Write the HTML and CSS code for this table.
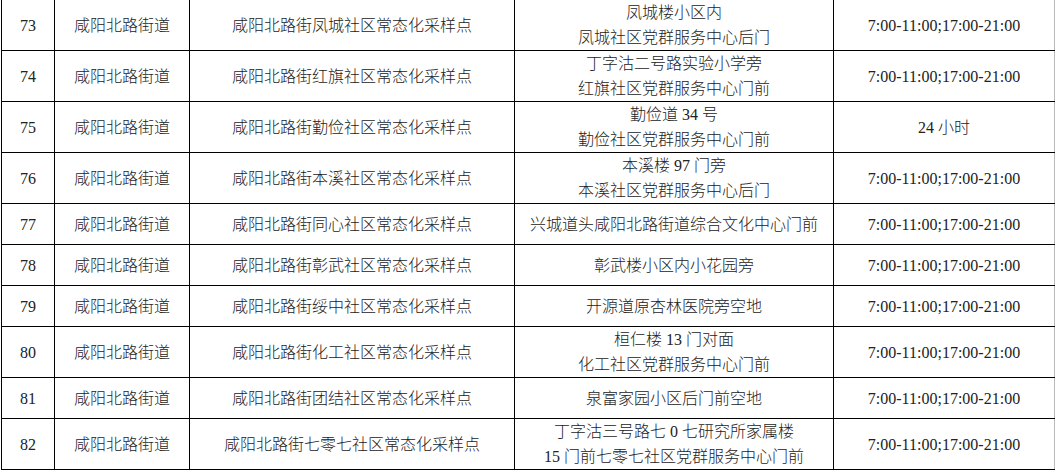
FILE: index.html
```html
<!DOCTYPE html>
<html lang="zh-CN">
<head>
<meta charset="utf-8">
<link rel="stylesheet" href="styles.css">
</head>
<body>
<div class="wrap">
<table class="sites">
<colgroup>
<col class="c-no"><col class="c-street"><col class="c-name"><col class="c-addr"><col class="c-time">
</colgroup>
<tbody>
<tr class="first"><td>73</td><td>咸阳北路街道</td><td>咸阳北路街凤城社区常态化采样点</td><td>凤城楼小区内<br>凤城社区党群服务中心后门</td><td>7:00-11:00;17:00-21:00</td></tr>
<tr><td>74</td><td>咸阳北路街道</td><td>咸阳北路街红旗社区常态化采样点</td><td>丁字沽二号路实验小学旁<br>红旗社区党群服务中心门前</td><td>7:00-11:00;17:00-21:00</td></tr>
<tr><td>75</td><td>咸阳北路街道</td><td>咸阳北路街勤俭社区常态化采样点</td><td>勤俭道 34 号<br>勤俭社区党群服务中心门前</td><td>24 小时</td></tr>
<tr><td>76</td><td>咸阳北路街道</td><td>咸阳北路街本溪社区常态化采样点</td><td>本溪楼 97 门旁<br>本溪社区党群服务中心后门</td><td>7:00-11:00;17:00-21:00</td></tr>
<tr class="single"><td>77</td><td>咸阳北路街道</td><td>咸阳北路街同心社区常态化采样点</td><td>兴城道头咸阳北路街道综合文化中心门前</td><td>7:00-11:00;17:00-21:00</td></tr>
<tr class="single"><td>78</td><td>咸阳北路街道</td><td>咸阳北路街彰武社区常态化采样点</td><td>彰武楼小区内小花园旁</td><td>7:00-11:00;17:00-21:00</td></tr>
<tr class="single"><td>79</td><td>咸阳北路街道</td><td>咸阳北路街绥中社区常态化采样点</td><td>开源道原杏林医院旁空地</td><td>7:00-11:00;17:00-21:00</td></tr>
<tr><td>80</td><td>咸阳北路街道</td><td>咸阳北路街化工社区常态化采样点</td><td>桓仁楼 13 门对面<br>化工社区党群服务中心门前</td><td>7:00-11:00;17:00-21:00</td></tr>
<tr class="single"><td>81</td><td>咸阳北路街道</td><td>咸阳北路街团结社区常态化采样点</td><td>泉富家园小区后门前空地</td><td>7:00-11:00;17:00-21:00</td></tr>
<tr><td>82</td><td>咸阳北路街道</td><td>咸阳北路街七零七社区常态化采样点</td><td>丁字沽三号路七 0 七研究所家属楼<br>15 门前七零七社区党群服务中心门前</td><td>7:00-11:00;17:00-21:00</td></tr>
</tbody>
</table>
</div>
</body>
</html>
```
FILE: styles.css
```css
html, body {
  margin: 0;
  padding: 0;
  background: #ffffff;
}
.wrap {
  padding-left: 1px;
  margin-top: -1px;
  overflow: hidden;
  height: 471px;
}
.sites {
  border-collapse: collapse;
  table-layout: fixed;
  width: 1053px;
  font-family: "Liberation Serif", "Noto Sans CJK SC", serif;
  font-size: 16px;
  font-weight: 300;
  line-height: 25px;
  color: #222;
}
.c-no { width: 53px; }
.c-street { width: 135px; }
.c-name { width: 325px; }
.c-addr { width: 319px; }
.c-time { width: 221px; }
.sites td {
  border: 1px solid #000;
  text-align: center;
  vertical-align: middle;
  padding: 0;
  height: 50px;
  white-space: nowrap;
}
.sites tr.single td {
  height: 40px;
}
.sites td:last-child {
  border-right-color: #bbb;
}
```
